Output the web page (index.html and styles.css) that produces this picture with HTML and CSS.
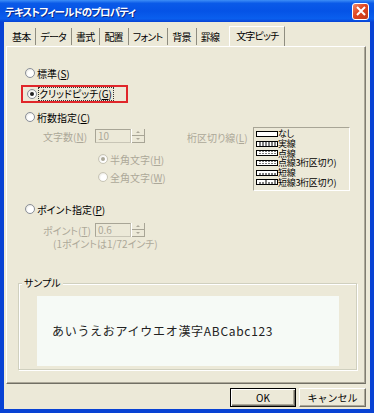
FILE: index.html
```html
<!DOCTYPE html>
<html lang="ja">
<head>
    <meta charset="UTF-8">
    <title>テキストフィールドのプロパティ</title>
    <link rel="stylesheet" href="styles.css">
</head>
<body>
    <div class="window">
        <div class="titlebar">
            <span class="title">テキストフィールドのプロパティ</span>
            <span class="close">
                <svg width="10" height="10" viewBox="0 0 10 10"><path d="M1 1 L9 9 M9 1 L1 9" stroke="#fff" stroke-width="2"/></svg>
            </span>
        </div>

        <div class="content">
            <div class="tabs">
                <span class="tab">基本</span>
                <span class="tab">データ</span>
                <span class="tab">書式</span>
                <span class="tab">配置</span>
                <span class="tab">フォント</span>
                <span class="tab">背景</span>
                <span class="tab last">罫線</span>
                <span class="tab active">文字ピッチ</span>
            </div>

            <div class="panel">
                <div class="opt first"><span class="radio"></span>標準(<u>S</u>)</div>

                <div class="highlight">
                    <div class="opt"><span class="radio checked"></span><span class="focus">クリッドピッチ(<u>G</u>)</span></div>
                </div>

                <div class="opt digits"><span class="radio"></span>桁数指定(<u>C</u>)</div>

                <div class="sub">
                    <div class="sub-left">
                        <div class="field">
                            <span class="label">文字数(<u>N</u>)</span>
                            <span class="input">10</span>
                            <span class="spin"><i class="up"></i><i class="down"></i></span>
                        </div>
                        <div class="opt inner dim"><span class="radio checked dim"></span>半角文字(<u>H</u>)</div>
                        <div class="opt inner dim"><span class="radio dim"></span>全角文字(<u>W</u>)</div>
                    </div>
                    <div class="sub-right">
                        <span class="label sep">桁区切り線(<u>L</u>)</span>
                        <div class="listbox">
                            <div class="item"><svg width="22" height="6"><rect x="0.5" y="0.5" width="21" height="5" fill="#fff" stroke="#000"/></svg>なし</div>
                            <div class="item"><svg width="22" height="6"><rect x="0.5" y="0.5" width="21" height="5" fill="#fff" stroke="#000"/><path d="M4 1v4M7 1v4M10 1v4M13 1v4M16 1v4M19 1v4" stroke="#000"/></svg>実線</div>
                            <div class="item"><svg width="22" height="6"><rect x="0.5" y="0.5" width="21" height="5" fill="#fff" stroke="#000"/><path d="M4 1v4M7 1v4M10 1v4M13 1v4M16 1v4M19 1v4" stroke="#000" stroke-dasharray="1 1"/></svg>点線</div>
                            <div class="item"><svg width="22" height="6"><rect x="0.5" y="0.5" width="21" height="5" fill="#fff" stroke="#000"/><path d="M4 1v4M7 1v4M10 1v4M13 1v4M16 1v4M19 1v4" stroke="#000" stroke-dasharray="1 1"/></svg>点線3桁区切り)</div>
                            <div class="item"><svg width="22" height="6"><rect x="0.5" y="0.5" width="21" height="5" fill="#fff" stroke="#000"/><path d="M4 3v2M7 3v2M10 3v2M13 3v2M16 3v2M19 3v2" stroke="#000"/></svg>短線</div>
                            <div class="item"><svg width="22" height="6"><rect x="0.5" y="0.5" width="21" height="5" fill="#fff" stroke="#000"/><path d="M4 3v2M7 3v2M10 1v4M13 3v2M16 3v2M19 1v4" stroke="#000"/></svg>短線3桁区切り)</div>
                        </div>
                    </div>
                </div>

                <div class="opt point"><span class="radio"></span>ポイント指定(<u>P</u>)</div>

                <div class="field point-field">
                    <span class="label">ポイント(<u>T</u>)</span>
                    <span class="input">0.6</span>
                    <span class="spin"><i class="up"></i><i class="down"></i></span>
                </div>
                <div class="note">(1ポイントは1/72インチ)</div>

                <div class="group">
                    <span class="legend">サンプル</span>
                    <div class="sample">
                        <span class="sample-text">あいうえおアイウエオ漢字ABCabc123</span>
                    </div>
                </div>
            </div>

            <div class="buttons">
                <button class="btn default">OK</button>
                <button class="btn">キャンセル</button>
            </div>
        </div>
    </div>
</body>
</html>
```

FILE: styles.css
```css
body {
    margin: 0;
    font-family: "Noto Sans CJK JP", "Noto Sans", sans-serif;
    font-size: 10px;
    font-feature-settings: "palt";
    color: #000;
}

u {
    text-decoration: underline;
    text-underline-offset: 1px;
}

.window {
    width: 374px;
    height: 413px;
    box-sizing: border-box;
    background-color: #0842d4;
    padding: 0 4px 4px 4px;
    display: flex;
    flex-direction: column;
}

.titlebar {
    height: 22px;
    margin: 0 -4px;
    padding: 0 4px 0 5px;
    display: flex;
    align-items: center;
    justify-content: space-between;
    background: linear-gradient(#3d8ef7 0%, #0a5ae8 15%, #0553e6 50%, #0a5fee 85%, #0842d4 100%);
}

.title {
    color: #fff;
    font-weight: bold;
    font-size: 10.5px;
    text-shadow: 1px 1px 0 #0b2a8a;
    letter-spacing: -0.9px;
}

.close {
    width: 15px;
    height: 15px;
    margin-right: 1px;
    border: 1px solid #fff;
    border-radius: 3px;
    background: linear-gradient(135deg, #f08a6a 0%, #e0451f 45%, #c03a1a 100%);
    display: flex;
    align-items: center;
    justify-content: center;
}

.content {
    flex: 1;
    background-color: #ece9d8;
    display: flex;
    flex-direction: column;
}

.tabs {
    display: flex;
    align-items: flex-end;
    height: 24px;
    padding-left: 4px;
}

.tab {
    height: 17px;
    line-height: 17px;
    padding: 0 5px 0 4px;
    border-right: 1px solid #8f8d80;
    margin-bottom: 1px;
    letter-spacing: -0.8px;
}

.tab.last {
    border-right: none;
    padding-right: 10px;
}

.tab.active {
    height: 19px;
    line-height: 17px;
    padding: 0 6px 0 6px;
    margin-bottom: 0;
    border-left: 1px solid #fff;
    border-top: 1px solid #fff;
}

.panel {
    margin: 0 4px 0 2px;
    height: 338px;
    box-sizing: border-box;
    border-top: 1px solid #fff;
    border-left: 1px solid #fff;
    border-right: 1px solid #7f7d72;
    border-bottom: 1px solid #716f64;
    box-shadow: inset -1px -1px 0 #aca899;
}

.opt {
    height: 14px;
    display: flex;
    align-items: center;
    padding-left: 18px;
    white-space: nowrap;
}

.opt.first {
    margin-top: 19px;
}

.radio {
    width: 8px;
    height: 8px;
    border-radius: 50%;
    border: 1px solid #8a8f99;
    background: radial-gradient(circle at 60% 60%, #fff 40%, #dcdad0 100%);
    margin-right: 2px;
    position: relative;
    flex-shrink: 0;
}

.radio.checked::after {
    content: "";
    position: absolute;
    left: 2px;
    top: 2px;
    width: 4px;
    height: 4px;
    border-radius: 50%;
    background-color: #222;
}

.radio.dim {
    border-color: #c8c5b6;
}

.radio.checked.dim::after {
    background-color: #aca899;
}

.highlight {
    margin: 5px 0 0 14px;
    width: 103px;
    height: 14px;
    border: 2px solid #e0262a;
    display: flex;
    align-items: center;
}

.highlight .opt {
    padding-left: 4px;
}

.focus {
    outline: 1px dotted #333;
    outline-offset: 0;
    line-height: 12px;
    padding-right: 1px;
}

.opt.digits {
    margin-top: 7px;
}

.sub {
    display: flex;
    margin-top: 5px;
    height: 70px;
}

.sub-left {
    width: 150px;
}

.field {
    display: flex;
    align-items: center;
    height: 14px;
    padding-left: 36px;
}

.label {
    color: #aca899;
    width: 52px;
    white-space: nowrap;
}

.input {
    width: 32px;
    height: 12px;
    line-height: 12px;
    border: 1px solid #c8c5b6;
    border-top-color: #a8a596;
    border-left-color: #a8a596;
    color: #aca899;
    background-color: #ece9d8;
    padding-left: 2px;
}

.spin {
    width: 13px;
    height: 14px;
    display: flex;
    flex-direction: column;
    border-left: 1px solid #fff;
}

.spin i {
    flex: 1;
    border-right: 1px solid #a8a596;
    border-bottom: 1px solid #a8a596;
    position: relative;
}

.spin i::after {
    content: "";
    position: absolute;
    left: 4px;
    border-left: 2px solid transparent;
    border-right: 2px solid transparent;
}

.spin .up::after {
    top: 2px;
    border-bottom: 2px solid #aca899;
}

.spin .down::after {
    top: 2px;
    border-top: 2px solid #aca899;
}

.opt.inner {
    padding-left: 91px;
    margin-top: 9px;
    color: #aca899;
}

.opt.inner + .opt.inner {
    margin-top: 4px;
}

.sub-right {
    display: flex;
    align-items: flex-start;
}

.label.sep {
    padding-top: 1px;
    padding-left: 30px;
    width: 66px;
}

.listbox {
    margin-top: -2px;
    width: 97px;
    height: 64px;
    box-sizing: border-box;
    border: 1px solid #a8a596;
    border-right-color: #fff;
    border-bottom-color: #fff;
    padding: 1px 0 0 2px;
}

.item {
    display: flex;
    align-items: center;
    height: 9.7px;
    font-size: 9px;
    line-height: 9px;
    white-space: nowrap;
    letter-spacing: -0.3px;
}

.item svg {
    flex-shrink: 0;
}

.opt.point {
    margin-top: 3px;
}

.point-field {
    margin-top: 7px;
}

.note {
    color: #aca899;
    padding-left: 46px;
    height: 12px;
    line-height: 12px;
    margin-top: 1px;
}

.group {
    position: relative;
    margin: 33px 8px 0 11px;
    height: 85px;
    border: 1px solid #d0d0bf;
    box-shadow: inset 1px 1px 0 #fff, 1px 1px 0 #fff;
}

.legend {
    position: absolute;
    top: -8px;
    left: 3px;
    padding: 0 2px;
    background-color: #ece9d8;
    line-height: 14px;
}

.sample {
    margin: 12px 17px 0 18px;
    height: 70px;
    background-color: #f6faf6;
    display: flex;
    align-items: center;
}

.sample-text {
    padding-left: 15px;
    padding-bottom: 2px;
    font-size: 12px;
    letter-spacing: 0.7px;
    font-feature-settings: normal;
    color: #222;
}

.buttons {
    display: flex;
    justify-content: flex-end;
    gap: 3px;
    padding: 4px 4px 0 0;
}

.btn {
    width: 67px;
    height: 19px;
    font-family: "Noto Sans CJK JP", "Noto Sans", sans-serif;
    font-size: 10px;
    padding: 0;
    background-color: #ece9d8;
    border: 1px solid;
    border-color: #fff #716f64 #716f64 #fff;
    box-shadow: inset -1px -1px 0 #aca899;
    line-height: 15px;
    color: #000;
}

.btn.default {
    border: 1px solid #000;
    box-shadow: inset 1px 1px 0 #fff, inset -1px -1px 0 #716f64, inset -2px -2px 0 #aca899;
    width: 66px;
}
```
